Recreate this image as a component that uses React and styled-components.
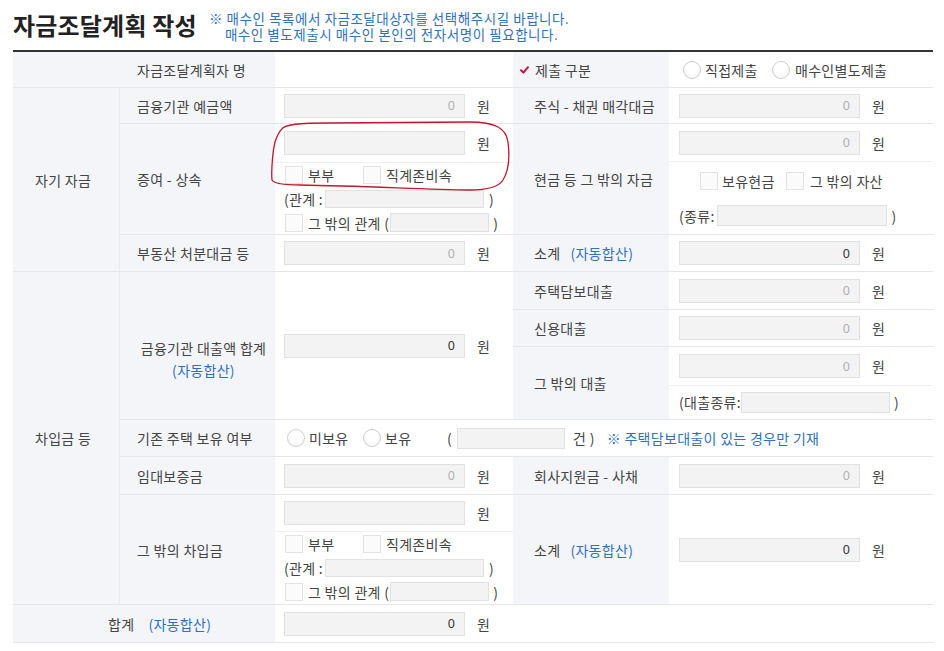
import React from 'react';
import styled, { createGlobalStyle } from 'styled-components';

const Global = createGlobalStyle`
  html, body { margin: 0; padding: 0; background: #fff; }
  body {
    font-family: "Noto Sans CJK KR", "Noto Sans", sans-serif;
    color: #444;
    font-size: 13px;
  }
`;

const Page = styled.div`
  width: 944px;
  box-sizing: border-box;
  padding: 0 11px 0 13px;
`;

const Header = styled.div`
  display: flex;
  align-items: center;
  height: 50px;
  gap: 12px;
`;

const Title = styled.h1`
  margin: 0;
  font-size: 24px;
  line-height: 30px;
  font-weight: 700;
  color: #222;
  letter-spacing: 0.2px;
`;

const Note = styled.div`
  color: #2f72ba;
  font-size: 13.5px;
  line-height: 16px;
  letter-spacing: 0.55px;
  padding-top: 2px;
`;

const NoteLine = styled.div`
  padding-left: ${(p) => p.$indent || 0}px;
`;

const Table = styled.div`
  position: relative;
  display: grid;
  grid-template-columns: 107px 155px 238px 156px 264px;
  grid-template-rows: 36px 36px 111px 37px 38px 37px 73px 37px 38px 110px 38px;
  border-top: 2px solid #333;
  font-size: 14px;
  letter-spacing: 0.3px;
`;

const Cell = styled.div`
  grid-column: ${(p) => p.$col};
  grid-row: ${(p) => p.$row};
  box-sizing: border-box;
  border-bottom: 1px solid #e5e6ea;
  display: flex;
  align-items: center;
  min-width: 0;
  white-space: nowrap;
`;

const Label = styled(Cell)`
  background: #f4f5f9;
  padding-left: ${(p) => (p.$pl ?? 17)}px;
  color: #444;
  border-right: ${(p) => (p.$divider ? '1px solid #e9eaef' : 'none')};
`;

const CenterLabel = styled(Label)`
  flex-direction: column;
  justify-content: center;
  align-items: center;
  padding-left: 12px;
  padding-top: 26px;
  line-height: 22px;
`;

const Field = styled(Cell)`
  padding-left: ${(p) => (p.$pl ?? 9)}px;
  background: #fff;
`;

const Stack = styled(Cell)`
  flex-direction: column;
  align-items: stretch;
  justify-content: flex-start;
`;

const SubRow = styled.div`
  display: flex;
  align-items: center;
  flex: none;
  box-sizing: border-box;
  height: ${(p) => p.$h}px;
  padding-left: ${(p) => (p.$pl ?? 9)}px;
  border-bottom: ${(p) => (p.$line ? '1px solid #f1f1f3' : 'none')};
`;

const Auto = styled.span`
  color: #2f72ba;
  margin-left: ${(p) => p.$gap ?? 10}px;
`;

const Input = styled.input`
  width: ${(p) => p.$w || 181}px;
  height: ${(p) => p.$h || 24}px;
  box-sizing: border-box;
  border: 1px solid #e1e1e1;
  background: #f3f3f3;
  text-align: right;
  padding: 0 9px;
  margin: 0 0 0 ${(p) => p.$ml || 0}px;
  font-family: "Noto Sans", "Noto Sans CJK KR", sans-serif;
  font-size: 12.5px;
  color: ${(p) => (p.$dark ? '#333' : '#b0b0b0')};
  outline: none;
  flex: none;
`;

const Unit = styled.span`
  margin-left: ${(p) => p.$ml ?? 12}px;
  color: #444;
`;

const Opt = styled.span`
  display: inline-flex;
  align-items: center;
  gap: ${(p) => p.$gap ?? 5}px;
  width: ${(p) => (p.$w ? `${p.$w}px` : 'auto')};
  flex: none;
`;

const Check = styled.span`
  width: 18px;
  height: 18px;
  box-sizing: border-box;
  border: 1px solid #e3e3e3;
  background: #fbfbfb;
  flex: none;
`;

const Radio = styled.span`
  width: 18px;
  height: 18px;
  box-sizing: border-box;
  border-radius: 50%;
  border: 1px solid #cfcfcf;
  background: radial-gradient(circle at 50% 35%, #fff 40%, #f0f0f0 100%);
  flex: none;
`;

const Text = styled.span`
  margin-left: ${(p) => p.$ml || 0}px;
  color: ${(p) => p.$color || '#444'};
`;

const Overlay = styled.svg`
  position: absolute;
  left: 0;
  top: 0;
  width: 920px;
  height: 591px;
  pointer-events: none;
  overflow: visible;
`;

const RedCheck = () => (
  <svg width="9" height="8" viewBox="0 0 9 8" style={{ marginRight: 6 }}>
    <path d="M1 4.2 L3.4 6.6 L8 1.2" fill="none" stroke="#c4173a" strokeWidth="2" strokeLinecap="round" strokeLinejoin="round" />
  </svg>
);

const Money = ({ dark, w }) => (
  <>
    <Input readOnly value="0" $dark={dark} $w={w} />
    <Unit>원</Unit>
  </>
);

const Relations = ({ first }) => (
  <>
    <SubRow $h={first} $line>
      <Input readOnly value="" />
      <Unit>원</Unit>
    </SubRow>
    <SubRow $h={24} $pl={10}>
      <Opt $w={78}><Check /><span>부부</span></Opt>
      <Opt><Check /><span>직계존비속</span></Opt>
    </SubRow>
    <SubRow $h={24}>
      <span>(관계 :</span>
      <Input readOnly value="" $w={159} $h={18} $ml={2} />
      <Text $ml={5}>)</Text>
    </SubRow>
    <SubRow $h={23} $pl={10}>
      <Opt $gap={5}><Check /><span>그 밖의 관계 (</span></Opt>
      <Input readOnly value="" $w={99} $h={19} $ml={1} />
      <Text $ml={4}>)</Text>
    </SubRow>
  </>
);

export default function App() {
  return (
    <>
      <Global />
      <Page>
        <Header>
          <Title>자금조달계획 작성</Title>
          <Note>
            <NoteLine>※ 매수인 목록에서 자금조달대상자를 선택해주시길 바랍니다.</NoteLine>
            <NoteLine $indent={16}>매수인 별도제출시 매수인 본인의 전자서명이 필요합니다.</NoteLine>
          </Note>
        </Header>

        <Table>
          {/* row 1 */}
          <Label $col="1 / 3" $row="1" $pl={124}>자금조달계획자 명</Label>
          <Field $col="3" $row="1" />
          <Label $col="4" $row="1" $pl={7}><RedCheck />제출 구분</Label>
          <Field $col="5" $row="1" $pl={14}>
            <Opt $w={89} $gap={4}><Radio /><span>직접제출</span></Opt>
            <Opt $gap={5}><Radio /><span>매수인별도제출</span></Opt>
          </Field>

          {/* 자기 자금 */}
          <Label $col="1" $row="2 / 5" $pl={22} $divider>자기 자금</Label>

          <Label $col="2" $row="2">금융기관 예금액</Label>
          <Field $col="3" $row="2"><Money /></Field>
          <Label $col="4" $row="2" $pl={21}>주식 - 채권 매각대금</Label>
          <Field $col="5" $row="2" $pl={10}><Money /></Field>

          <Label $col="2" $row="3">증여 - 상속</Label>
          <Stack $col="3" $row="3"><Relations first={39} /></Stack>
          <Label $col="4" $row="3" $pl={21}>현금 등 그 밖의 자금</Label>
          <Stack $col="5" $row="3">
            <SubRow $h={38} $pl={10} $line><Money /></SubRow>
            <SubRow $h={37} $pl={31}>
              <Opt $w={86} $gap={4}><Check /><span>보유현금</span></Opt>
              <Opt $gap={6}><Check /><span>그 밖의 자산</span></Opt>
            </SubRow>
            <SubRow $h={33} $pl={10}>
              <span>(종류:</span>
              <Input readOnly value="" $w={170} $h={21} $ml={2} />
              <Text $ml={5}>)</Text>
            </SubRow>
          </Stack>

          <Label $col="2" $row="4">부동산 처분대금 등</Label>
          <Field $col="3" $row="4"><Money /></Field>
          <Label $col="4" $row="4" $pl={21}>소계<Auto>(자동합산)</Auto></Label>
          <Field $col="5" $row="4" $pl={10}><Money dark /></Field>

          {/* 차입금 등 */}
          <Label $col="1" $row="5 / 11" $pl={22} $divider>차입금 등</Label>

          <CenterLabel $col="2" $row="5 / 8">
            <span>금융기관 대출액 합계</span>
            <Auto $gap={0}>(자동합산)</Auto>
          </CenterLabel>
          <Field $col="3" $row="5 / 8"><Money dark /></Field>

          <Label $col="4" $row="5" $pl={21}>주택담보대출</Label>
          <Field $col="5" $row="5" $pl={10}><Money /></Field>
          <Label $col="4" $row="6" $pl={21}>신용대출</Label>
          <Field $col="5" $row="6" $pl={10}><Money /></Field>
          <Label $col="4" $row="7" $pl={21}>그 밖의 대출</Label>
          <Stack $col="5" $row="7">
            <SubRow $h={39} $pl={10} $line><Money /></SubRow>
            <SubRow $h={32} $pl={10}>
              <span>(대출종류:</span>
              <Input readOnly value="" $w={149} $h={21} $ml={0} />
              <Text $ml={4}>)</Text>
            </SubRow>
          </Stack>

          <Label $col="2" $row="8">기존 주택 보유 여부</Label>
          <Field $col="3 / 6" $row="8" $pl={12}>
            <Opt $w={76} $gap={4}><Radio /><span>미보유</span></Opt>
            <Opt $w={84} $gap={4}><Radio /><span>보유</span></Opt>
            <span>(</span>
            <Input readOnly value="" $w={108} $h={21} $ml={5} />
            <Text $ml={8}>건 )</Text>
            <Text $ml={12} $color="#2f72ba">※ 주택담보대출이 있는 경우만 기재</Text>
          </Field>

          <Label $col="2" $row="9">임대보증금</Label>
          <Field $col="3" $row="9"><Money /></Field>
          <Label $col="4" $row="9" $pl={21}>회사지원금 - 사채</Label>
          <Field $col="5" $row="9" $pl={10}><Money /></Field>

          <Label $col="2" $row="10">그 밖의 차입금</Label>
          <Stack $col="3" $row="10"><Relations first={37} /></Stack>
          <Label $col="4" $row="10" $pl={21}>소계<Auto>(자동합산)</Auto></Label>
          <Field $col="5" $row="10" $pl={10}><Money dark /></Field>

          {/* 합계 */}
          <Label $col="1 / 3" $row="11" $pl={95}>합계<Auto $gap={14}>(자동합산)</Auto></Label>
          <Field $col="3" $row="11"><Money dark /></Field>
          <Field $col="4 / 6" $row="11" />

          <Overlay viewBox="0 0 920 591">
            <g transform="translate(-13,-52)">
              <path
                d="M281 130 C284 124, 300 123, 330 123 L470 122 C495 122, 506 128, 508 142 C510 158, 508 172, 503 180 C498 188, 485 190, 470 190 C420 189, 360 186, 300 185 C285 185, 274 184, 272 180 C271 170, 273 150, 275 142 C277 136, 279 132, 281 130 Z"
                fill="none"
                stroke="#c0182c"
                strokeWidth="1.3"
              />
            </g>
          </Overlay>
        </Table>
      </Page>
    </>
  );
}
